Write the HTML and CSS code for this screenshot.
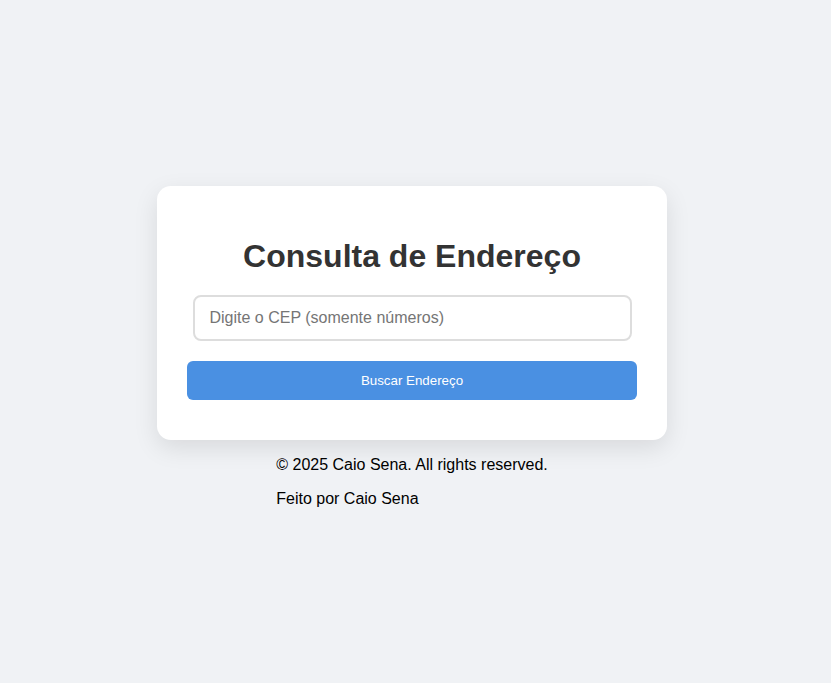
FILE: index.html
```html
<!DOCTYPE html>
<html lang="pt-BR">
<head>
<meta charset="UTF-8">
<title>Consulta de Endereço</title>
<link rel="stylesheet" href="styles.css">
</head>
<body>
  <main class="card">
    <h1 class="title">Consulta de Endereço</h1>
    <input class="cep-input" type="text" placeholder="Digite o CEP (somente números)">
    <button class="search-btn">Buscar Endereço</button>
  </main>
  <footer class="footer">
    <p>© 2025 Caio Sena. All rights reserved.</p>
    <p>Feito por Caio Sena</p>
  </footer>
</body>
</html>
```

FILE: styles.css
```css
html, body {
  margin: 0;
  padding: 0;
}
body {
  background: #f0f2f5;
  font-family: "Liberation Sans", Arial, sans-serif;
  display: flex;
  flex-direction: column;
  align-items: center;
  padding: 186px 7px 0 0;
  min-height: 100vh;
  box-sizing: border-box;
}
.card {
  box-sizing: border-box;
  width: 510px;
  background: #fff;
  border-radius: 14px;
  padding: 40px 30px;
  box-shadow: 0 8px 24px rgba(0, 0, 0, 0.1);
  display: flex;
  flex-direction: column;
  align-items: center;
}
.title {
  margin: 12px 0 20px;
  font-size: 32px;
  font-weight: bold;
  color: #333;
  text-align: center;
}
.cep-input {
  width: 90%;
  padding: 12px 15px;
  font-size: 16px;
  line-height: 18px;
  font-family: "Liberation Sans", Arial, sans-serif;
  border: 2px solid #ddd;
  border-radius: 8px;
  outline: none;
  color: #333;
  background: #fff;
  margin: 0;
}
.cep-input::placeholder {
  color: #757575;
}
.search-btn {
  margin-top: 20px;
  width: 100%;
  height: 39px;
  background: #4a90e2;
  color: #fff;
  border: none;
  border-radius: 6px;
  font-family: "Liberation Sans", Arial, sans-serif;
  font-size: 13.33px;
  cursor: pointer;
}
.footer {
  color: #000;
  font-size: 16px;
}
.footer p {
  margin: 16px 0;
  line-height: 18px;
}
```
